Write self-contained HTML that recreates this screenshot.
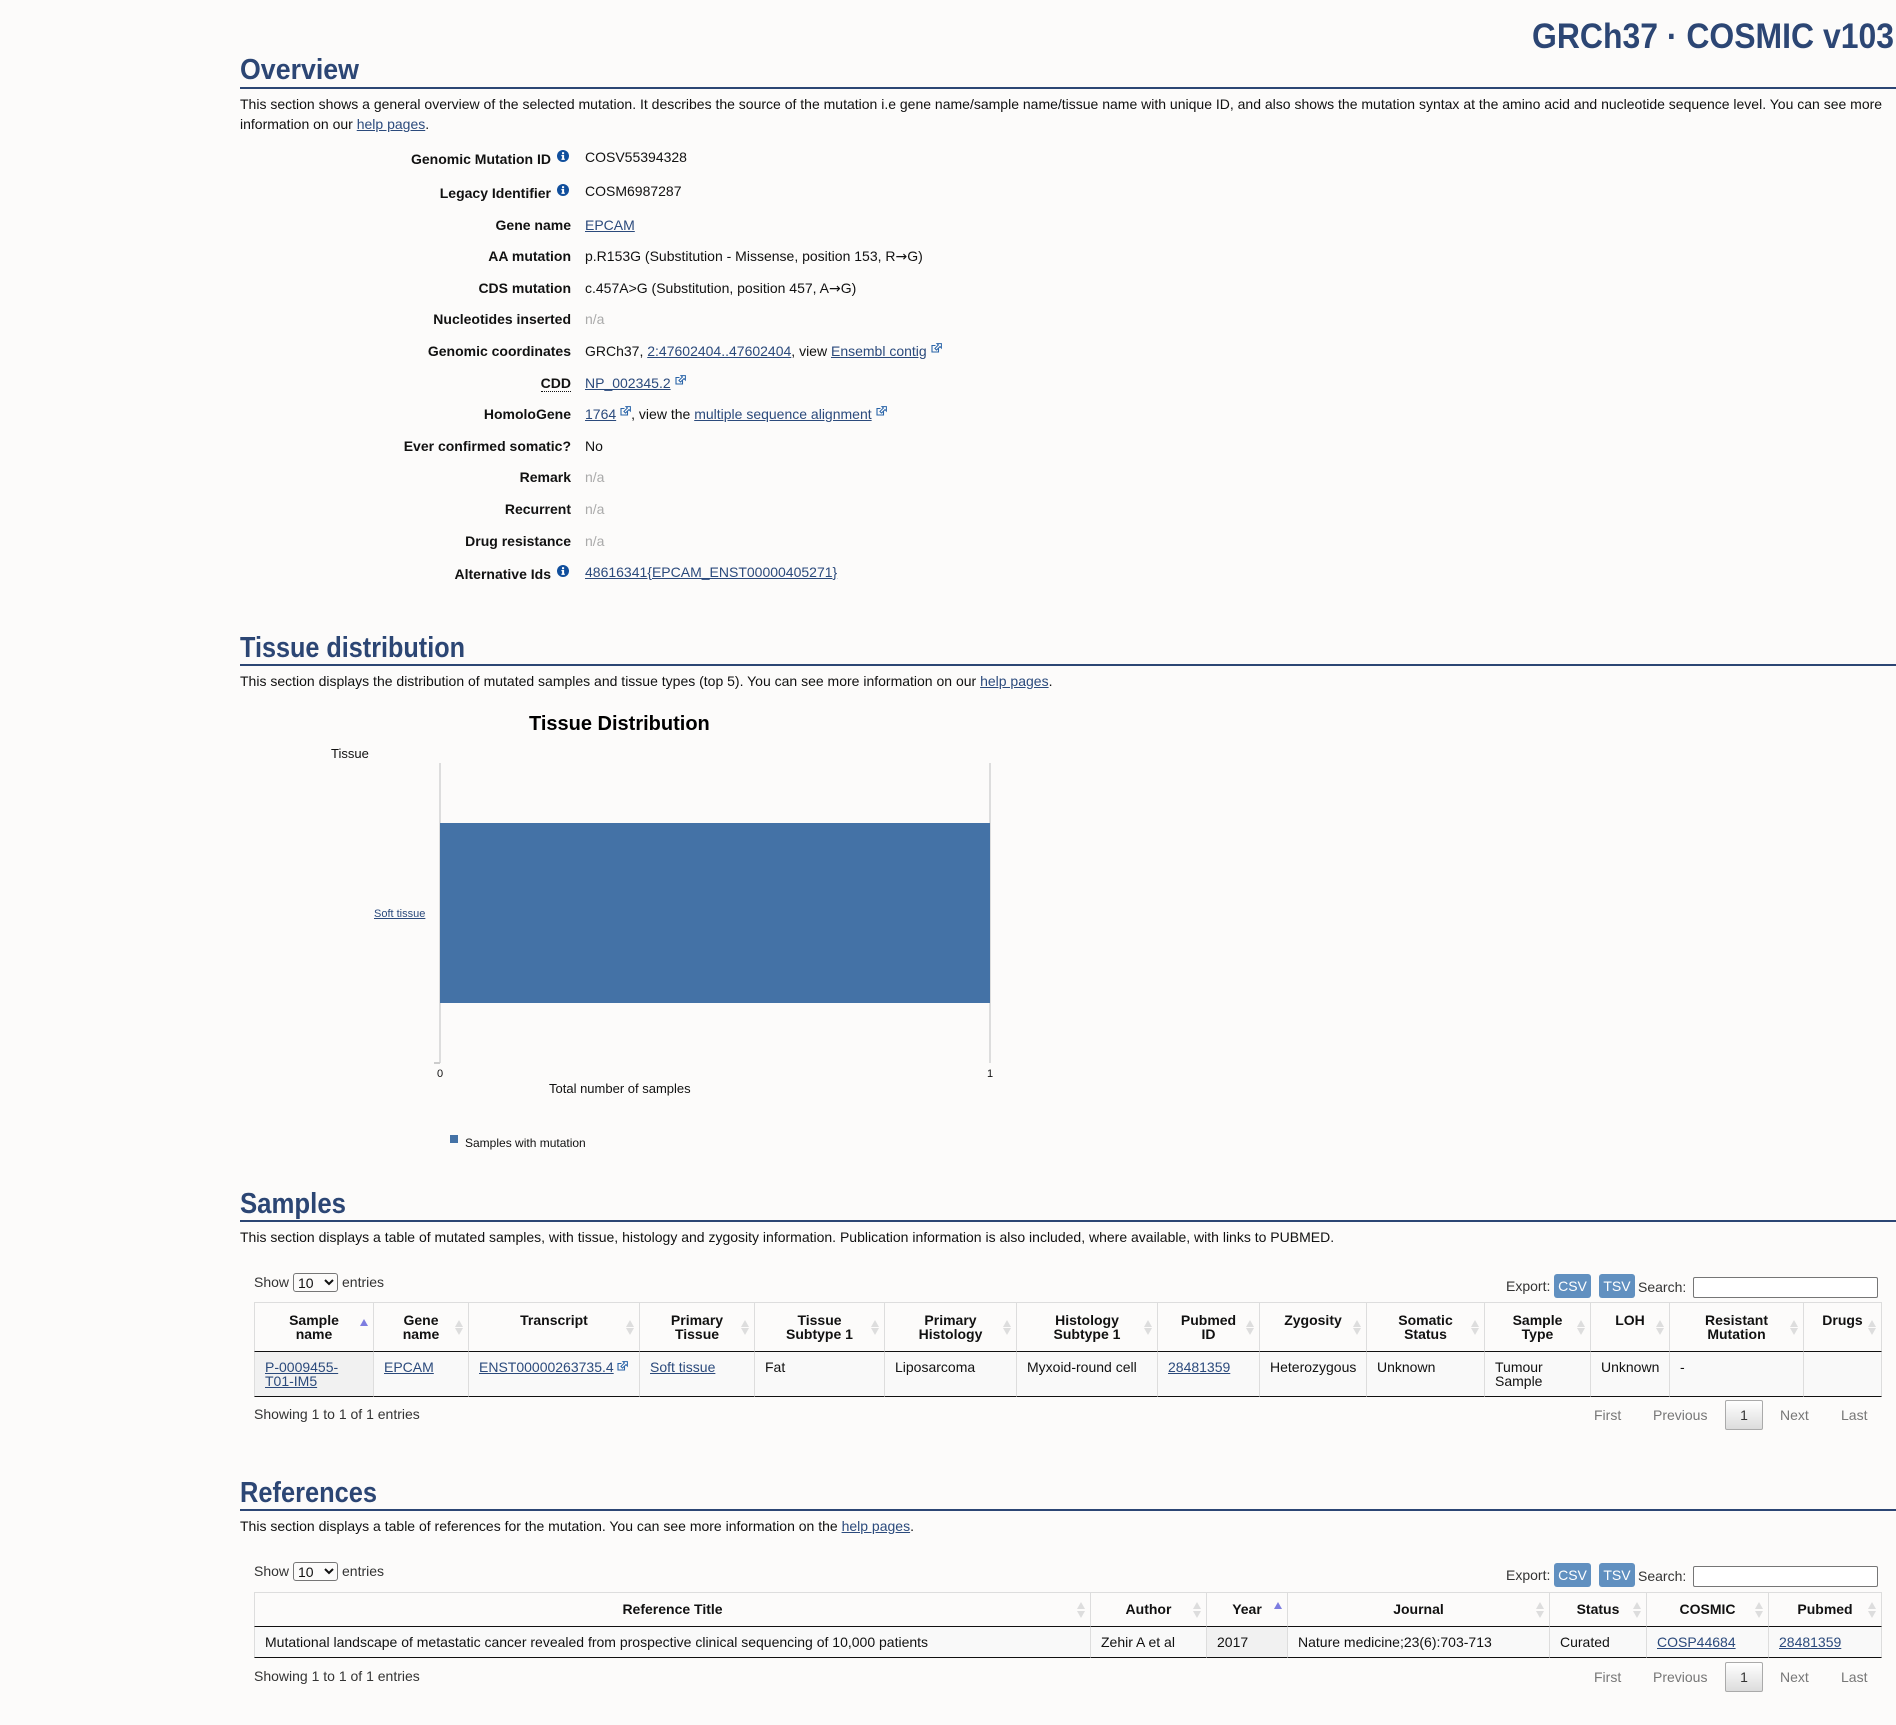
<!DOCTYPE html>
<html><head><meta charset="utf-8"><title>COSMIC</title>
<style>
html,body{margin:0;padding:0;width:1896px;height:1725px;overflow:hidden;background:#fcfbfa}
body{position:relative;font:14px/20px "Liberation Sans",sans-serif;color:#111}
a{color:#2b4a7c;text-decoration:underline}
.t{position:absolute;white-space:nowrap}
.l{position:absolute;white-space:nowrap;right:1325px;font-weight:bold}
.v{position:absolute;white-space:nowrap;left:585px}
.na{color:#aaa}
.ar{font-family:"DejaVu Sans",sans-serif}
.rule{position:absolute;left:240px;width:1656px;height:2px;background:#2c4674}
svg.h{position:absolute;left:0;top:0}
svg.h text{font-family:"Liberation Sans",sans-serif;font-weight:bold;fill:#2c4674}
.i{position:absolute;width:12px;height:12px}
.e{display:inline-block;width:11px;height:10px;vertical-align:3px;margin-left:4px}
table{position:absolute;left:254px;width:1628px;border-collapse:separate;border-spacing:0;table-layout:fixed;font-size:14px;line-height:14px}
th{position:relative;box-sizing:border-box;border-top:1px solid #ddd;border-bottom:1px solid #111;border-right:1px solid #ddd;padding:10px 10px 0;vertical-align:top;text-align:center;font-weight:bold}
th:first-child,td:first-child{border-left:1px solid #ddd}
td{box-sizing:border-box;border-bottom:1px solid #111;border-right:1px solid #ddd;padding:8px 10px 0;vertical-align:top;background:#f9f9f9;word-break:normal}
td.s{background:#f1f1f1}
th i{position:absolute;right:5px;width:0;height:0;border-left:4.5px solid transparent;border-right:4.5px solid transparent}
th i.u{top:17px;border-bottom:7px solid #ddd}
th i.d{top:25px;border-top:7px solid #ddd}
th i.a{top:16px;border-bottom:7px solid #7d7de0}
.r th i.u{top:9px}.r th i.d{top:18px}.r th i.a{top:9px}
.r th{padding-top:9px}
.g{color:#333}
.b{position:absolute;width:37px;height:24px;background:#6190c0;border-radius:3px;color:#fff;text-align:center;line-height:24px;font-size:14px}
.in{position:absolute;box-sizing:border-box;left:1693px;width:185px;height:21px;background:#fff;border:1px solid #767676;border-radius:2px}
select{position:absolute;left:293px;width:45px;height:19px;box-sizing:border-box;font:14px "Liberation Sans",sans-serif;padding:0;background:#fcfbfa;color:#111;border:1px solid #767676;border-radius:3px}
.p{position:absolute;color:#777;white-space:nowrap}
.c{position:absolute;left:1725px;width:38px;height:30px;box-sizing:border-box;border:1px solid #aaa;border-radius:2px;background:linear-gradient(#fff,#dcdcdc);color:#333;text-align:center;line-height:28px}
</style></head><body>
<svg width="0" height="0" style="position:absolute"><defs>
<symbol id="ext" viewBox="0 0 11 10"><path d="M4.5 2.5H1V9H7.5V5.5" fill="none" stroke="#2a64a8" stroke-width="1.1"/><path d="M6 .6H10.4V5L9 3.6 5.5 7 3.9 5.5 7.4 2Z" fill="#fff" stroke="#2a64a8" stroke-width="1"/></symbol>
<symbol id="inf" viewBox="0 0 12 12"><circle cx="6" cy="6" r="6" fill="#104e9c"/><rect x="5" y="2.2" width="2.1" height="2" fill="#fff"/><path d="M4.4 5H7.1V8.6H7.8V9.9H4.4V8.6H5.1V6.2H4.4Z" fill="#fff"/></symbol>
</defs></svg>

<svg class="h" width="1896" height="1725">
<text x="1532" y="48" font-size="35" textLength="362" lengthAdjust="spacingAndGlyphs">GRCh37 · COSMIC v103</text>
<text x="240" y="79" font-size="29" textLength="119" lengthAdjust="spacingAndGlyphs">Overview</text>
<text x="240" y="657" font-size="29" textLength="225" lengthAdjust="spacingAndGlyphs">Tissue distribution</text>
<text x="240" y="1213" font-size="29" textLength="106" lengthAdjust="spacingAndGlyphs">Samples</text>
<text x="240" y="1502" font-size="29" textLength="137" lengthAdjust="spacingAndGlyphs">References</text>
</svg>

<div class="rule" style="top:87px"></div>
<div class="t" style="left:240px;top:94px">This section shows a general overview of the selected mutation. It describes the source of the mutation i.e gene name/sample name/tissue name with unique ID, and also shows the mutation syntax at the amino acid and nucleotide sequence level. You can see more</div>
<div class="t" style="left:240px;top:114px">information on our <a>help pages</a>.</div>

<div class="l" style="top:149px;right:1345px">Genomic Mutation ID</div><svg class="i" style="left:557px;top:150px"><use href="#inf"/></svg><div class="v" style="top:147px">COSV55394328</div>
<div class="l" style="top:183px;right:1345px">Legacy Identifier</div><svg class="i" style="left:557px;top:184px"><use href="#inf"/></svg><div class="v" style="top:181px">COSM6987287</div>
<div class="l" style="top:215px">Gene name</div><div class="v" style="top:215px"><a>EPCAM</a></div>
<div class="l" style="top:246px">AA mutation</div><div class="v" style="top:246px">p.R153G (Substitution - Missense, position 153, R<span class="ar">→</span>G)</div>
<div class="l" style="top:278px">CDS mutation</div><div class="v" style="top:278px">c.457A&gt;G (Substitution, position 457, A<span class="ar">→</span>G)</div>
<div class="l" style="top:309px">Nucleotides inserted</div><div class="v na" style="top:309px">n/a</div>
<div class="l" style="top:341px">Genomic coordinates</div><div class="v" style="top:341px">GRCh37, <a>2:47602404..47602404</a>, view <a>Ensembl contig</a><svg class="e"><use href="#ext"/></svg></div>
<div class="l" style="top:373px"><span style="border-bottom:1px dotted #111;display:inline-block;line-height:15px">CDD</span></div><div class="v" style="top:373px"><a>NP_002345.2</a><svg class="e"><use href="#ext"/></svg></div>
<div class="l" style="top:404px">HomoloGene</div><div class="v" style="top:404px"><a>1764</a><svg class="e"><use href="#ext"/></svg>, view the <a>multiple sequence alignment</a><svg class="e"><use href="#ext"/></svg></div>
<div class="l" style="top:436px">Ever confirmed somatic?</div><div class="v" style="top:436px">No</div>
<div class="l" style="top:467px">Remark</div><div class="v na" style="top:467px">n/a</div>
<div class="l" style="top:499px">Recurrent</div><div class="v na" style="top:499px">n/a</div>
<div class="l" style="top:531px">Drug resistance</div><div class="v na" style="top:531px">n/a</div>
<div class="l" style="top:564px;right:1345px">Alternative Ids</div><svg class="i" style="left:557px;top:565px"><use href="#inf"/></svg><div class="v" style="top:562px"><a>48616341{EPCAM_ENST00000405271}</a></div>

<div class="rule" style="top:664px"></div>
<div class="t" style="left:240px;top:671px">This section displays the distribution of mutated samples and tissue types (top 5). You can see more information on our <a>help pages</a>.</div>

<div class="t" style="left:529px;top:712px;font-size:20px;line-height:24px;font-weight:bold;color:#000">Tissue Distribution</div>
<div class="t" style="left:331px;top:744px;font-size:13px">Tissue</div>
<div class="t" style="left:374px;top:904px;font-size:11px"><a>Soft tissue</a></div>
<div style="position:absolute;left:439px;top:763px;width:2px;height:300px;background:#ddd"></div>
<div style="position:absolute;left:989px;top:763px;width:2px;height:300px;background:#ddd"></div>
<div style="position:absolute;left:434px;top:1062px;width:6px;height:2px;background:#ccc"></div>
<div style="position:absolute;left:440px;top:823px;width:550px;height:180px;background:#4472a6"></div>
<div class="t" style="left:437px;top:1064px;font-size:11px">0</div>
<div class="t" style="left:987px;top:1064px;font-size:11px">1</div>
<div class="t" style="left:549px;top:1079px;font-size:13px">Total number of samples</div>
<div style="position:absolute;left:450px;top:1135px;width:8px;height:8px;background:#4472a6"></div>
<div class="t" style="left:465px;top:1133px;font-size:12px">Samples with mutation</div>

<div class="rule" style="top:1220px"></div>
<div class="t" style="left:240px;top:1227px">This section displays a table of mutated samples, with tissue, histology and zygosity information. Publication information is also included, where available, with links to PUBMED.</div>

<div class="t g" style="left:254px;top:1272px">Show</div>
<select style="top:1273px"><option>10</option></select>
<div class="t g" style="left:342px;top:1272px">entries</div>
<div class="t g" style="left:1506px;top:1276px">Export:</div>
<div class="b" style="left:1554px;top:1274px">CSV</div>
<div class="b" style="left:1599px;top:1274px;width:36px">TSV</div>
<div class="t g" style="left:1638px;top:1277px">Search:</div>
<div class="in" style="top:1277px"></div>

<table style="top:1302px">
<colgroup><col style="width:120px"><col style="width:95px"><col style="width:171px"><col style="width:115px"><col style="width:130px"><col style="width:132px"><col style="width:141px"><col style="width:102px"><col style="width:107px"><col style="width:118px"><col style="width:106px"><col style="width:79px"><col style="width:134px"><col style="width:78px"></colgroup>
<tr style="height:50px">
<th>Sample<br>name<i class="a"></i></th>
<th>Gene<br>name<i class="u"></i><i class="d"></i></th>
<th>Transcript<i class="u"></i><i class="d"></i></th>
<th>Primary<br>Tissue<i class="u"></i><i class="d"></i></th>
<th>Tissue<br>Subtype 1<i class="u"></i><i class="d"></i></th>
<th>Primary<br>Histology<i class="u"></i><i class="d"></i></th>
<th>Histology<br>Subtype 1<i class="u"></i><i class="d"></i></th>
<th>Pubmed<br>ID<i class="u"></i><i class="d"></i></th>
<th>Zygosity<i class="u"></i><i class="d"></i></th>
<th>Somatic<br>Status<i class="u"></i><i class="d"></i></th>
<th>Sample<br>Type<i class="u"></i><i class="d"></i></th>
<th>LOH<i class="u"></i><i class="d"></i></th>
<th>Resistant<br>Mutation<i class="u"></i><i class="d"></i></th>
<th>Drugs<i class="u"></i><i class="d"></i></th>
</tr>
<tr style="height:45px">
<td class="s"><a>P-0009455-<br>T01-IM5</a></td>
<td><a>EPCAM</a></td>
<td style="white-space:nowrap"><a>ENST00000263735.4</a><svg class="e" style="margin-left:3px;vertical-align:1px"><use href="#ext"/></svg></td>
<td><a>Soft tissue</a></td>
<td>Fat</td>
<td>Liposarcoma</td>
<td style="white-space:nowrap">Myxoid-round cell</td>
<td><a>28481359</a></td>
<td>Heterozygous</td>
<td>Unknown</td>
<td>Tumour<br>Sample</td>
<td>Unknown</td>
<td>-</td>
<td></td>
</tr>
</table>

<div class="t g" style="left:254px;top:1404px">Showing 1 to 1 of 1 entries</div>
<div class="p" style="left:1594px;top:1405px">First</div>
<div class="p" style="left:1653px;top:1405px">Previous</div>
<div class="c" style="top:1400px">1</div>
<div class="p" style="left:1780px;top:1405px">Next</div>
<div class="p" style="left:1841px;top:1405px">Last</div>

<div class="rule" style="top:1509px"></div>
<div class="t" style="left:240px;top:1516px">This section displays a table of references for the mutation. You can see more information on the <a>help pages</a>.</div>

<div class="t g" style="left:254px;top:1561px">Show</div>
<select style="top:1562px"><option>10</option></select>
<div class="t g" style="left:342px;top:1561px">entries</div>
<div class="t g" style="left:1506px;top:1565px">Export:</div>
<div class="b" style="left:1554px;top:1563px">CSV</div>
<div class="b" style="left:1599px;top:1563px;width:36px">TSV</div>
<div class="t g" style="left:1638px;top:1566px">Search:</div>
<div class="in" style="top:1566px"></div>

<table class="r" style="top:1592px">
<colgroup><col style="width:837px"><col style="width:116px"><col style="width:81px"><col style="width:262px"><col style="width:97px"><col style="width:122px"><col style="width:113px"></colgroup>
<tr style="height:35px">
<th>Reference Title<i class="u"></i><i class="d"></i></th>
<th>Author<i class="u"></i><i class="d"></i></th>
<th>Year<i class="a"></i></th>
<th>Journal<i class="u"></i><i class="d"></i></th>
<th>Status<i class="u"></i><i class="d"></i></th>
<th>COSMIC<i class="u"></i><i class="d"></i></th>
<th>Pubmed<i class="u"></i><i class="d"></i></th>
</tr>
<tr style="height:31px">
<td>Mutational landscape of metastatic cancer revealed from prospective clinical sequencing of 10,000 patients</td>
<td>Zehir A et al</td>
<td class="s">2017</td>
<td>Nature medicine;23(6):703-713</td>
<td>Curated</td>
<td><a>COSP44684</a></td>
<td><a>28481359</a></td>
</tr>
</table>

<div class="t g" style="left:254px;top:1666px">Showing 1 to 1 of 1 entries</div>
<div class="p" style="left:1594px;top:1667px">First</div>
<div class="p" style="left:1653px;top:1667px">Previous</div>
<div class="c" style="top:1662px">1</div>
<div class="p" style="left:1780px;top:1667px">Next</div>
<div class="p" style="left:1841px;top:1667px">Last</div>
</body></html>
